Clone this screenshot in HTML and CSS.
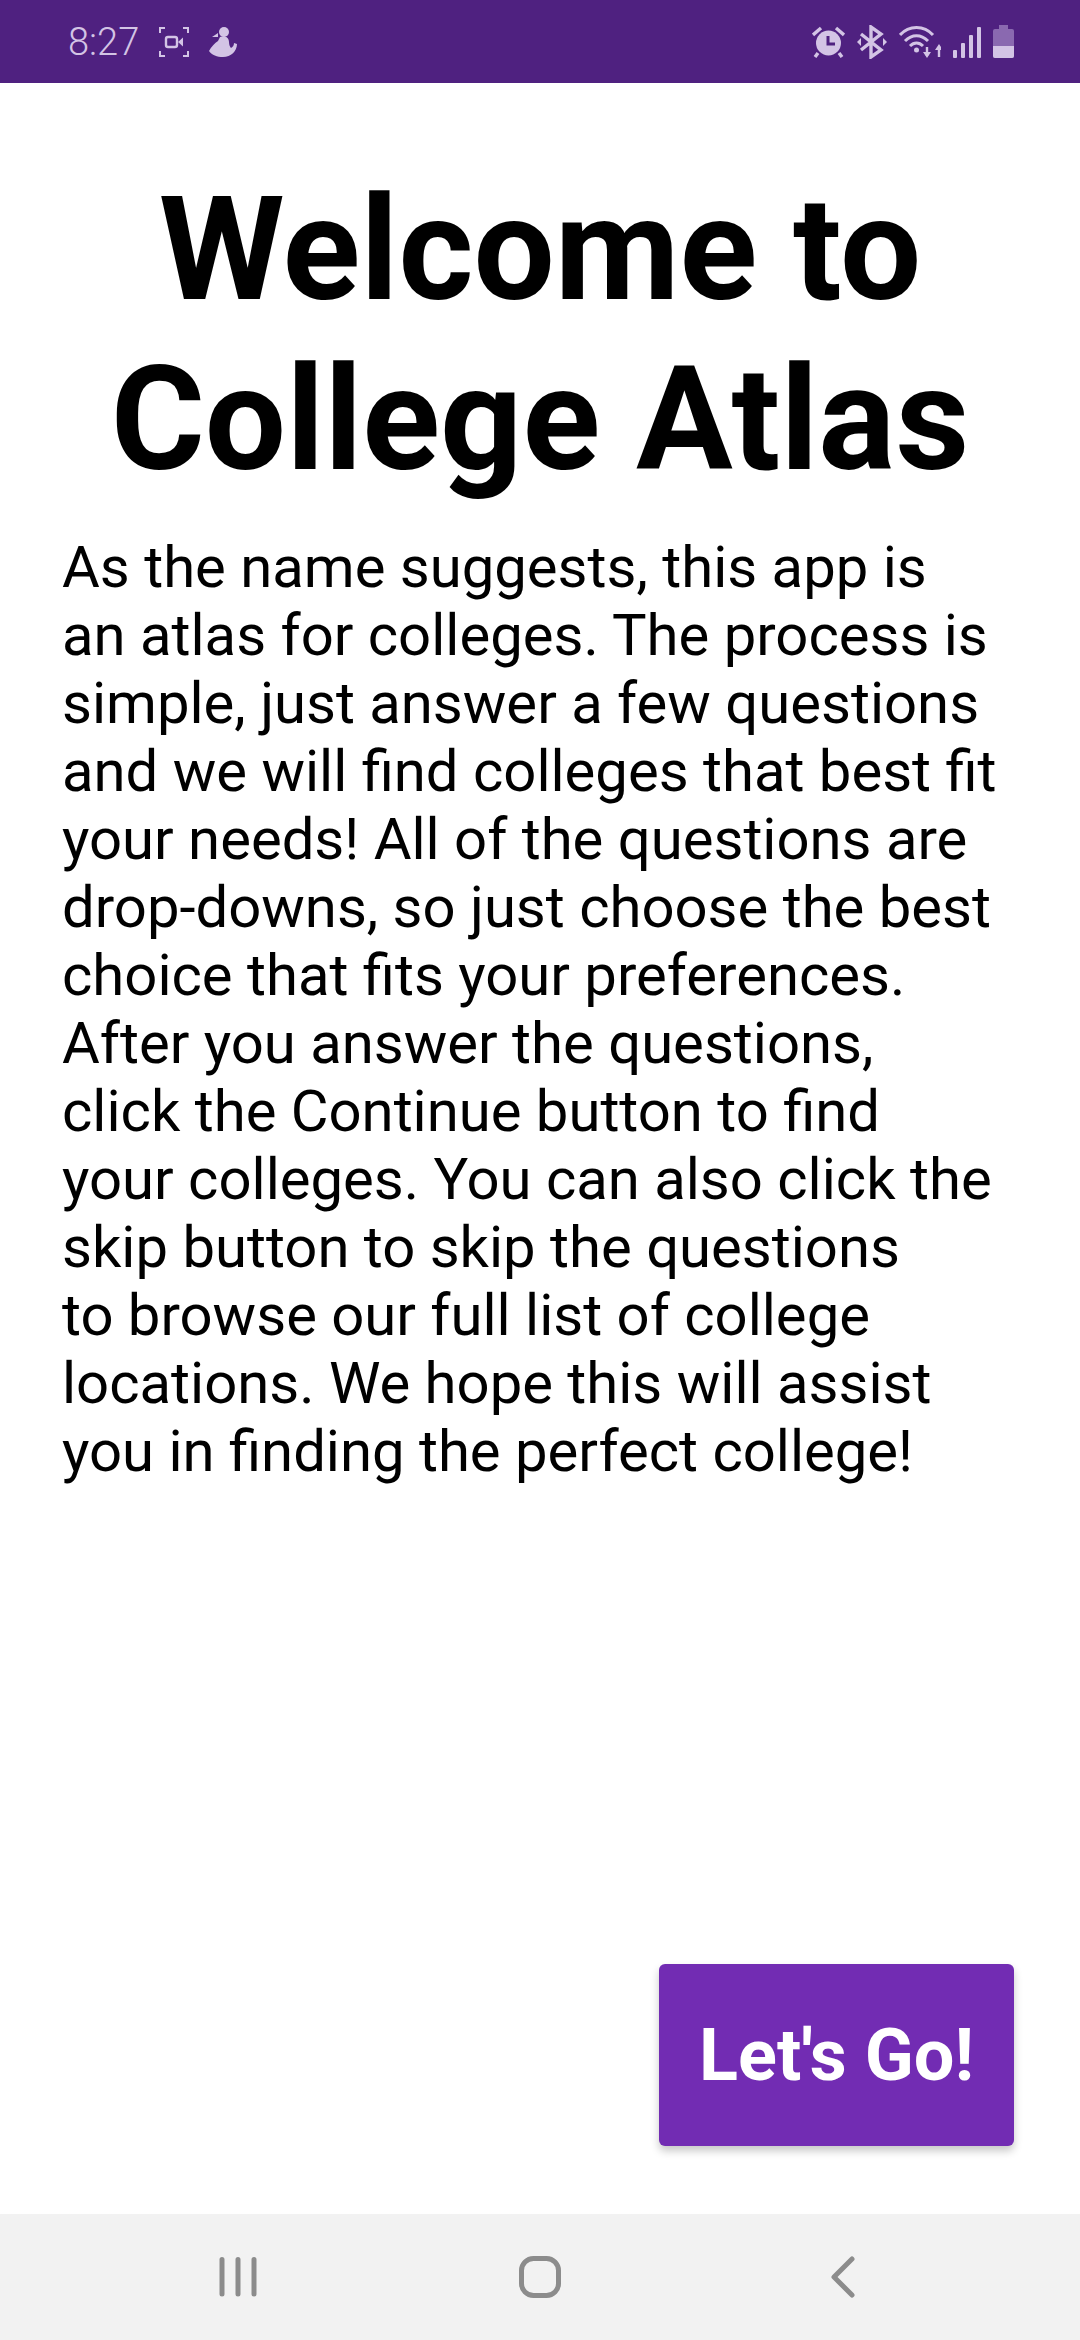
FILE: index.html
```html
<!DOCTYPE html>
<html lang="en">
<head>
    <meta charset="UTF-8">
    <meta name="viewport" content="width=device-width, initial-scale=1.0">
    <title>College Atlas</title>
    <link rel="stylesheet" href="styles.css">
</head>
<body>

    <div class="status-bar">
        <div class="status-left">
            <span class="clock">8:27</span>
            <svg class="icon-record" width="30" height="30" viewBox="0 0 30 30" fill="none" stroke="currentColor">
                <path d="M1 6V1H6M24 1H29V6M29 24V29H24M6 29H1V24" stroke-width="2"/>
                <rect x="7" y="10" width="11" height="10" rx="2" stroke-width="2.4"/>
                <path d="M19 15L24 10.500V19.500Z" fill="currentColor" stroke="none"/>
            </svg>
            <svg class="icon-person" width="28" height="30" viewBox="0 0 28 30" fill="currentColor">
                <circle cx="15" cy="5" r="5"/>
                <path d="M11 10C15 8 20 10 20 15C20 18 21 20 22 21C24 20 25 18 25 16L28 17C28 24 22 30 14 30C8 30 3 28 0 24C2 20 6 16 9 14Z"/>
                <path d="M9 6L3 10L9 10Z"/>
            </svg>
        </div>
        <div class="status-right">
            <svg width="33" height="32" viewBox="0 0 33 32">
                <circle cx="16.500" cy="17" r="12.500" fill="currentColor"/>
                <path d="M16 10V18H23" fill="none" stroke="#4f2180" stroke-width="3"/>
                <path d="M1 9L9 2M32 9L24 2M6 27L3 31M27 27L30 31" fill="none" stroke="currentColor" stroke-width="3.400"/>
            </svg>
            <svg width="30" height="34" viewBox="0 0 30 34" fill="none" stroke="currentColor" stroke-width="3.400">
                <path d="M4 9L24 25L14 32V2L24 9L4 25"/>
                <path d="M0 17L4 13V21ZM30 17L26 13V21Z" fill="currentColor" stroke="none"/>
            </svg>
            <svg width="42" height="32" viewBox="0 0 42 32" fill="none" stroke="currentColor" stroke-width="3">
                <path d="M1 9C10 -1 25 -1 34 9"/>
                <path d="M6 15C13 8 22 8 29 15"/>
                <path d="M11 20C15 16 20 16 24 20"/>
                <circle cx="17.500" cy="24" r="2.500" fill="currentColor" stroke="none"/>
                <path d="M28 21V30M40 31V22" stroke-width="2.400"/>
                <path d="M24 26H32L28 32ZM36 24H44L40 18Z" fill="currentColor" stroke="none"/>
            </svg>
            <svg width="28" height="32" viewBox="0 0 28 32" fill="currentColor">
                <rect x="0" y="24" width="4" height="8" rx="1"/>
                <rect x="8" y="17" width="4" height="15" rx="1"/>
                <rect x="16" y="9" width="4" height="23" rx="1"/>
                <rect x="24" y="1" width="4" height="31" rx="1"/>
            </svg>
            <div class="battery">
                <div class="battery-cap"></div>
                <div class="battery-body"><div class="battery-level"></div></div>
            </div>
        </div>
    </div>

    <div class="content">
        <h1>Welcome to<br>College Atlas</h1>
        <p class="intro">As the name suggests, this app is<br>
            an atlas for colleges. The process is<br>
            simple, just answer a few questions<br>
            and we will find colleges that best fit<br>
            your needs! All of the questions are<br>
            drop-downs, so just choose the best<br>
            choice that fits your preferences.<br>
            After you answer the questions,<br>
            click the Continue button to find<br>
            your colleges. You can also click the<br>
            skip button to skip the questions<br>
            to browse our full list of college<br>
            locations. We hope this will assist<br>
            you in finding the perfect college!</p>
        <button class="go-button">Let's Go!</button>
    </div>

    <div class="nav-bar">
        <svg width="60" height="44" viewBox="0 0 60 44" fill="none" stroke="#8c8c8c" stroke-width="5" stroke-linecap="round">
            <path d="M14 4.500V39M30 4.500V39M46 4.500V39"/>
        </svg>
        <svg width="60" height="44" viewBox="0 0 60 44" fill="none" stroke="#8c8c8c" stroke-width="5">
            <rect x="11.500" y="3.500" width="37" height="37" rx="12"/>
        </svg>
        <svg width="60" height="44" viewBox="0 0 60 44" fill="none" stroke="#8c8c8c" stroke-width="5" stroke-linecap="round" stroke-linejoin="round">
            <path d="M40 4L22 22L40 40" transform="translate(0 0)"/>
        </svg>
    </div>

</body>
</html>
```

FILE: styles.css
```css
body {
    margin: 0;
    height: 2340px;
    display: flex;
    flex-direction: column;
    font-family: Roboto, sans-serif;
    background-color: #ffffff;
    color: #000000;
    overflow: hidden;
}

.status-bar {
    height: 83px;
    flex-shrink: 0;
    display: flex;
    align-items: center;
    justify-content: space-between;
    padding: 0 66px 0 68px;
    background-color: #4f2180;
    color: #d3c4e5;
}

.status-left,
.status-right {
    display: flex;
    align-items: center;
}

.status-left svg {
    margin-left: 20px;
}

.status-right {
    gap: 12px;
}

.clock {
    font-size: 38px;
    font-weight: 300;
}

.battery {
    width: 21px;
    display: flex;
    flex-direction: column;
    align-items: center;
}

.battery-cap {
    width: 9px;
    height: 4px;
    background-color: #8a69b0;
}

.battery-body {
    width: 21px;
    height: 29px;
    border-radius: 2px;
    overflow: hidden;
    display: flex;
    align-items: flex-end;
    background-color: #8a69b0;
}

.battery-level {
    width: 100%;
    height: 12px;
    background-color: #d3c4e5;
}

.content {
    flex: 1;
    display: flex;
    flex-direction: column;
    padding: 82px 66px 68px 62px;
}

h1 {
    margin: 0 0 0 4px;
    font-size: 144px;
    font-weight: 700;
    line-height: 170px;
    text-align: center;
}

.intro {
    margin: 28px 0 0 0;
    font-size: 58px;
    line-height: 68px;
    white-space: nowrap;
}

.go-button {
    margin-top: auto;
    align-self: flex-end;
    width: 355px;
    height: 182px;
    border: none;
    border-radius: 6px;
    background-color: #722cb3;
    color: #ffffff;
    font-family: Roboto, sans-serif;
    font-size: 72px;
    font-weight: 700;
    box-shadow: 0 5px 8px rgba(0, 0, 0, 0.22);
}

.nav-bar {
    height: 126px;
    flex-shrink: 0;
    display: flex;
    align-items: flex-start;
    justify-content: space-between;
    padding: 41px 208px 0 208px;
    box-sizing: border-box;
    background-color: #f2f2f2;
}
```
